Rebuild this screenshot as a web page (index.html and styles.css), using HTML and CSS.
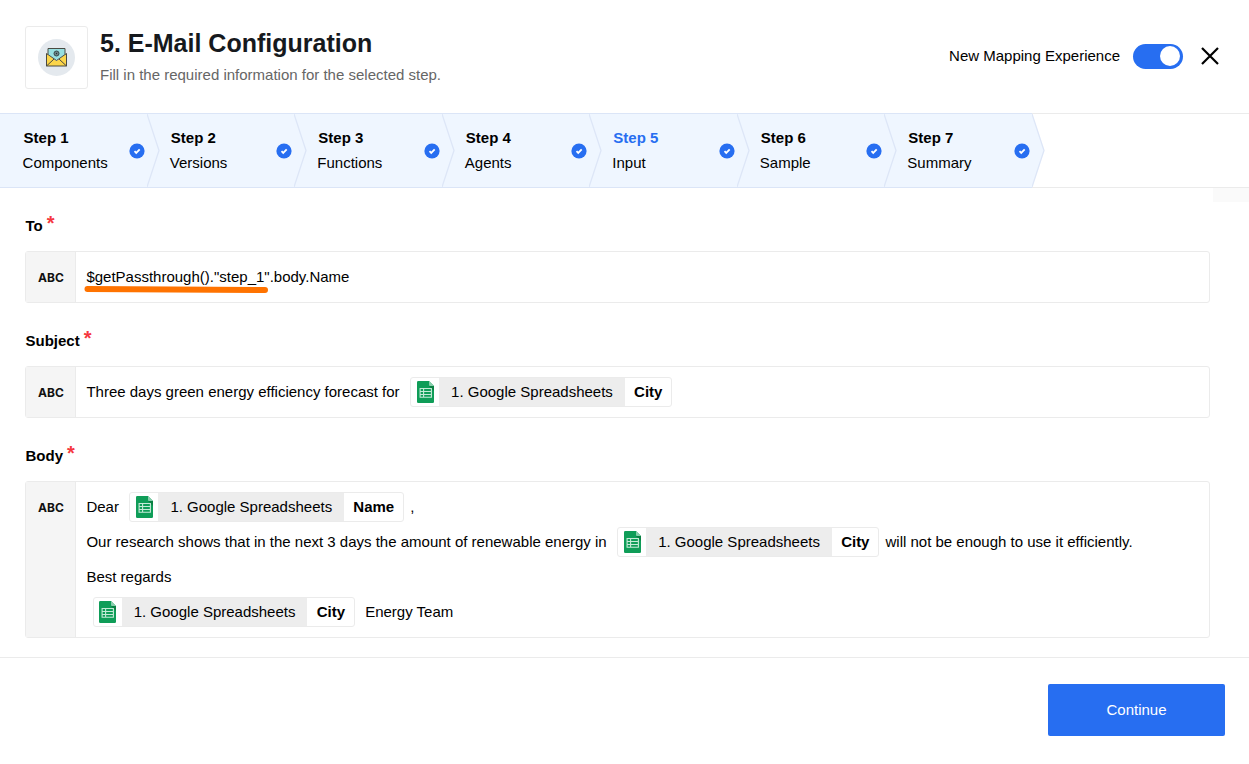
FILE: index.html
```html
<!DOCTYPE html>
<html lang="en">
<head>
<meta charset="utf-8">
<title>E-Mail Configuration</title>
<link rel="stylesheet" href="styles.css">
</head>
<body>
<svg class="defs" width="0" height="0" aria-hidden="true">
  <symbol id="check" viewBox="0 0 16 16">
    <circle cx="8" cy="8" r="7.6" fill="#276ef1"/>
    <path d="M5.5 8.2 7.2 9.9 10.7 6.3" fill="none" stroke="#fff" stroke-width="1.8"/>
  </symbol>
  <symbol id="chevron" viewBox="0 0 13 73">
    <path d="M0 0 12 36.5 0 73Z" fill="#eff6ff"/>
    <path d="M0 0 12 36.5 0 73" fill="none" stroke="#dde6f7" stroke-width="1.3"/>
  </symbol>
  <symbol id="sheet" viewBox="0 0 17 22">
    <path d="M1.3 0H12L17 5V20.7Q17 22 15.700 22H1.300Q0 22 0 20.700V1.300Q0 0 1.300 0Z" fill="#0f9d58"/>
    <path d="M12 5H17V10Z" fill="#0b8043"/>
    <path d="M12 0 17 5H13Q12 5 12 4Z" fill="#87ceac"/>
    <path d="M3 7.500H14.500M3 10.500H14.500M3 13.500H14.500M3 16.300H14.500M3.100 7V16.800M14.400 7V16.800M6.600 7V16.800" fill="none" stroke="#c5ead7" stroke-width="1.100"/>
  </symbol>
</svg>

<header class="header">
  <div class="logo">
    <svg width="37" height="37" viewBox="0 0 37 37">
      <circle cx="18.500" cy="18.500" r="18.500" fill="#e4e9ee"/>
      <path d="M8.500 14.500 18.500 22 28.500 14.500V27H8.500Z" fill="#fcd549"/>
      <path d="M10 9.500H27V15.500L18.500 21.500 10 15.500Z" fill="#97dfe0"/>
      <path d="M10 15.500V9.500H27V15.500M8.500 14.500V27H28.500V14.500L18.500 21.500ZM8.500 27 16 20M28.500 27 21 20" fill="none" stroke="#4a4a42" stroke-width="1"/>
      <circle cx="18.500" cy="14.500" r="2.500" fill="#6b8587" stroke="#38494c" stroke-width="1"/>
      <circle cx="18.500" cy="14.500" r=".7" fill="#263033"/>
    </svg>
  </div>
  <div class="heading">
    <h1 class="title">5. E-Mail Configuration</h1>
    <p class="subtitle">Fill in the required information for the selected step.</p>
  </div>
  <div class="controls">
    <span class="toggle-label">New Mapping Experience</span>
    <span class="toggle"><span class="knob"></span></span>
    <svg class="close" width="18" height="18" viewBox="0 0 18 18"><path d="M1 1 17 17M17 1 1 17" stroke="#000" stroke-width="2.200"/></svg>
  </div>
</header>

<nav class="steps">
  <div class="step"><div><b class="step-no">Step 1</b><span class="step-name">Components</span></div><svg class="check"><use href="#check"/></svg><svg class="chevron"><use href="#chevron"/></svg></div>
  <div class="step"><div><b class="step-no">Step 2</b><span class="step-name">Versions</span></div><svg class="check"><use href="#check"/></svg><svg class="chevron"><use href="#chevron"/></svg></div>
  <div class="step"><div><b class="step-no">Step 3</b><span class="step-name">Functions</span></div><svg class="check"><use href="#check"/></svg><svg class="chevron"><use href="#chevron"/></svg></div>
  <div class="step"><div><b class="step-no">Step 4</b><span class="step-name">Agents</span></div><svg class="check"><use href="#check"/></svg><svg class="chevron"><use href="#chevron"/></svg></div>
  <div class="step"><div><b class="step-no active">Step 5</b><span class="step-name">Input</span></div><svg class="check"><use href="#check"/></svg><svg class="chevron"><use href="#chevron"/></svg></div>
  <div class="step"><div><b class="step-no">Step 6</b><span class="step-name">Sample</span></div><svg class="check"><use href="#check"/></svg><svg class="chevron"><use href="#chevron"/></svg></div>
  <div class="step"><div><b class="step-no">Step 7</b><span class="step-name">Summary</span></div><svg class="check"><use href="#check"/></svg><svg class="chevron"><use href="#chevron"/></svg></div>
</nav>

<main class="form">
  <div class="corner"></div>
  <section class="field">
    <div class="label">To<span class="req">*</span></div>
    <div class="box">
      <div class="type">ABC</div>
      <div class="content">
        <div class="line"><span class="marked">$getPassthrough()."step_1"<svg class="marker" width="185" height="9" viewBox="0 0 185 9"><path d="M3.500 4 181 5" stroke="#ff7300" stroke-width="6" stroke-linecap="round"/></svg></span>.body.Name</div>
      </div>
    </div>
  </section>
  <section class="field">
    <div class="label">Subject<span class="req">*</span></div>
    <div class="box">
      <div class="type">ABC</div>
      <div class="content">
        <div class="line"><span>Three days green energy efficiency forecast for </span><span class="chip"><span class="chip-icon"><svg width="17" height="22"><use href="#sheet"/></svg></span><span class="chip-source">1. Google Spreadsheets</span><b class="chip-key">City</b></span></div>
      </div>
    </div>
  </section>
  <section class="field">
    <div class="label">Body<span class="req">*</span></div>
    <div class="box">
      <div class="type">ABC</div>
      <div class="content">
        <div class="line"><span>Dear </span><span class="chip"><span class="chip-icon"><svg width="17" height="22"><use href="#sheet"/></svg></span><span class="chip-source">1. Google Spreadsheets</span><b class="chip-key">Name</b></span><span>,</span></div>
        <div class="line"><span>Our research shows that in the next 3 days the amount of renewable energy in </span><span class="chip"><span class="chip-icon"><svg width="17" height="22"><use href="#sheet"/></svg></span><span class="chip-source">1. Google Spreadsheets</span><b class="chip-key">City</b></span><span>will not be enough to use it efficiently.</span></div>
        <div class="line"><span>Best regards</span></div>
        <div class="line"><span class="chip"><span class="chip-icon"><svg width="17" height="22"><use href="#sheet"/></svg></span><span class="chip-source">1. Google Spreadsheets</span><b class="chip-key">City</b></span><span> Energy Team</span></div>
      </div>
    </div>
  </section>
</main>

<footer class="footer">
  <button class="continue">Continue</button>
</footer>
</body>
</html>
```
FILE: styles.css
```css
* { box-sizing: border-box; }

body {
  margin: 0;
  height: 764px;
  display: flex;
  flex-direction: column;
  overflow: hidden;
  background: #fff;
  color: #000;
  font: 15px/20px "Liberation Sans", Arial, sans-serif;
}

.defs { position: absolute; }

.header {
  display: flex;
  height: 113px;
  padding: 26px 30px 0 25px;
}

.logo {
  display: flex;
  align-items: center;
  justify-content: center;
  width: 63px;
  height: 63px;
  border: 1px solid #ebebeb;
  border-radius: 3px;
}

.heading { margin-left: 12px; }

.title {
  margin: 2px 0 0;
  color: #16191d;
  font-size: 25px;
  line-height: 30px;
}

.subtitle {
  margin: 7px 0 0;
  color: #666;
}

.controls {
  display: flex;
  align-items: center;
  height: 60px;
  margin-left: auto;
}

.toggle-label { margin-right: 13px; }

.toggle {
  display: flex;
  justify-content: flex-end;
  align-items: center;
  width: 50px;
  height: 25px;
  padding-right: 3px;
  border-radius: 13px;
  background: #276ef1;
}

.knob {
  width: 20px;
  height: 20px;
  border-radius: 50%;
  background: #fff;
}

.close { margin-left: 18px; }

.steps {
  display: flex;
  height: 75px;
  border-top: 1px solid #ebebeb;
  border-bottom: 1px solid #ebebeb;
}

.step {
  position: relative;
  display: flex;
  justify-content: space-between;
  width: 147.5px;
  height: 75px;
  margin-top: -1px;
  padding: 14px 2.500px 0 22.600px;
  border-top: 1px solid #dbe5f7;
  border-bottom: 1px solid #dbe5f7;
  background: #eff6ff;
}

.step:first-child { width: 147px; }
.step:not(:first-child) { padding-left: 22.8px; }

.step-no, .step-name { display: block; }
.step-no { margin-left: 1px; line-height: 19px; }
.step-name { line-height: 31px; }
.active { color: #276ef1; }

.check {
  width: 16px;
  height: 16px;
  margin-top: 15px;
}

.chevron {
  position: absolute;
  top: 0;
  right: -12.500px;
  z-index: 1;
  width: 13px;
  height: 73px;
}

.form {
  position: relative;
  height: 469px;
  padding: 24px 39px 0 25px;
}

.corner {
  position: absolute;
  top: 0;
  right: 0;
  width: 36px;
  height: 14px;
  background: #fafafa;
}

.field { margin-bottom: 24px; }

.label {
  display: flex;
  height: 39px;
  padding: 4px 0 0 .5px;
  font-weight: bold;
}

.req {
  margin: -3px 0 0 4px;
  color: #f5383f;
  font-size: 20px;
}

.box {
  display: flex;
  border: 1px solid #ebebeb;
  border-radius: 3px;
}

.type {
  width: 50px;
  padding: 16px 0 0 1px;
  border-right: 1px solid #ebebeb;
  background: #f5f5f5;
  color: #111;
  font: bold 12px/20px Inter, "Liberation Sans", sans-serif;
  text-align: center;
}

.content { padding: 7px 10px 8px 10.400px; }

.line {
  display: flex;
  align-items: center;
  height: 35px;
  white-space: pre;
}

.marked { position: relative; }

.marker {
  position: absolute;
  top: 18px;
  left: -2px;
}

.chip {
  display: flex;
  height: 30px;
  margin: 0 6px 0 6.300px;
  border: 1px solid #ebebeb;
  border-radius: 3px;
  line-height: 28px;
}

.chip-icon {
  display: flex;
  align-items: center;
  justify-content: center;
  width: 28px;
  padding-top: 1px;
}

.chip-source {
  padding: 0 12px;
  background: #ededed;
}

.chip-key { padding: 0 9px 0 9.200px; }

.footer {
  display: flex;
  justify-content: flex-end;
  height: 107px;
  padding: 26px 24px 0;
  border-top: 1px solid #ebebeb;
}

.continue {
  width: 177px;
  height: 52px;
  padding: 0;
  border: 0;
  border-radius: 2px;
  background: #276ef1;
  color: #fff;
  font: inherit;
}
```
